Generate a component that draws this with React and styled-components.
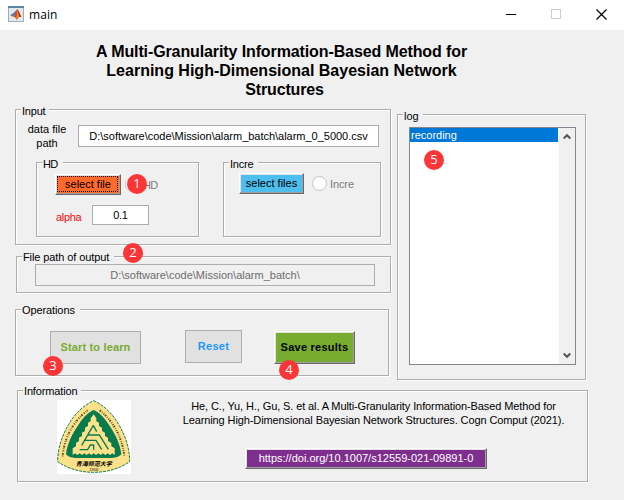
import React from "react";
import styled, { createGlobalStyle, css } from "styled-components";

const GlobalStyle = createGlobalStyle`
  * { box-sizing: border-box; }
  body { margin: 0; background: #f0f0f0; }
  button, input { font: inherit; margin: 0; }
`;

const Window = styled.div`
  position: relative;
  display: flex;
  flex-direction: column;
  width: 624px;
  height: 500px;
  overflow: hidden;
  background: #f0f0f0;
  color: #000;
  font: 11px/14px "Liberation Sans", Arial, sans-serif;
`;

const TitleBar = styled.header`
  display: flex;
  align-items: center;
  height: 30px;
  flex: none;
  padding: 0 17px 2px 8px;
  background: #fff;
`;

const AppName = styled.span`
  margin-left: 5px;
  font: 12px/16px "Open Sans", "Noto Sans", sans-serif;
  letter-spacing: 0.1px;
  padding-top: 2px;
`;

const WindowControls = styled.div`
  display: flex;
  gap: 35px;
  margin-left: auto;
  svg { display: block; }
`;

const Heading = styled.h1`
  width: 563px;
  height: 57px;
  margin: 12px 0 10px;
  flex: none;
  text-align: center;
  font-size: 16px;
  font-weight: 700;
  line-height: 19px;
`;

const HeadingLine = styled.span`
  display: block;
  padding-left: ${(p) => p.$shift || 0}px;
  letter-spacing: ${(p) => p.$ls || 0}px;
`;

const Columns = styled.div`
  display: flex;
  align-items: flex-start;
  gap: 6px;
  padding-left: 15px;
`;

const LeftColumn = styled.div`
  display: flex;
  flex-direction: column;
  width: 376px;
`;

const Group = styled.section`
  position: relative;
  flex: none;
  width: ${(p) => p.$w}px;
  height: ${(p) => p.$h}px;
  margin: ${(p) => p.$m || "0"};
  border: 1px solid #adadad;
  box-shadow: 1px 1px 0 #fff, inset 1px 1px 0 #fff;
`;

const Legend = styled.span`
  position: absolute;
  top: ${(p) => (p.$high ? -7 : -6)}px;
  left: 5px;
  width: ${(p) => p.$w}px;
  padding-left: 1px;
  background: #f0f0f0;
  white-space: nowrap;
  letter-spacing: ${(p) => p.$ls || 0}px;
`;

const PathRow = styled.div`
  display: flex;
  align-items: flex-start;
  height: 28px;
  margin-top: 12px;
`;

const PathLabel = styled.label`
  width: 62px;
  padding: 0 10px;
  text-align: center;
`;

const Field = styled.div`
  display: flex;
  align-items: center;
  justify-content: center;
  width: ${(p) => p.$w}px;
  height: ${(p) => p.$h}px;
  margin: ${(p) => p.$m || "0"};
  border: 1px solid ${(p) => (p.$disabled ? "#adadad" : "#abadb3")};
  background: ${(p) => (p.$disabled ? "#f0f0f0" : "#fff")};
  color: ${(p) => (p.$disabled ? "#6d6d6d" : "#000")};
  letter-spacing: ${(p) => p.$ls || 0}px;
  white-space: nowrap;
`;

const SubGroups = styled.div`
  display: flex;
  gap: 24px;
  margin: 12px 0 0 20px;
`;

const PickRow = styled.div`
  display: flex;
  align-items: center;
  padding-left: ${(p) => p.$left}px;
  margin-top: ${(p) => p.$top}px;
`;

const Button = styled.button`
  position: relative;
  display: flex;
  align-items: center;
  justify-content: center;
  flex: none;
  width: ${(p) => p.$w}px;
  height: ${(p) => p.$h}px;
  padding: 0 0 1px;
  border: 1px solid #adadad;
  border-radius: 0;
  background: ${(p) => p.$bg || "#e1e1e1"};
  color: ${(p) => p.$fg || "#000"};
  font-weight: ${(p) => (p.$bold ? 700 : 400)};
  letter-spacing: ${(p) => p.$ls || 0}px;
  white-space: nowrap;
  ${(p) =>
    p.$raised &&
    css`
      border-color: #fff #696969 #696969 #fff;
      box-shadow: inset -1px -1px 0 #a0a0a0, inset 1px 1px 0 #e3e3e3;
    `}
  ${(p) =>
    p.$focused &&
    css`
      &::after {
        content: "";
        position: absolute;
        inset: 1px 2px 2px 1px;
        border: 1px dotted #000;
      }
    `}
`;

const Radio = styled.span`
  display: flex;
  align-items: center;
  gap: 3px;
  margin-left: ${(p) => p.$left}px;
  color: #7b7b7b;
  letter-spacing: ${(p) => p.$ls || 0}px;
  &::before {
    content: "";
    width: 13px;
    height: 13px;
    border: 1px solid #c4c4c4;
    border-radius: 50%;
    background: #fff;
  }
`;

const AlphaRow = styled.div`
  display: flex;
  align-items: flex-start;
  margin: 10px 0 0 19px;
`;

const AlphaLabel = styled.label`
  width: 36px;
  padding-top: 5px;
  color: #f10d0d;
  letter-spacing: -0.3px;
`;

const OperationRow = styled.div`
  display: flex;
  align-items: flex-start;
  padding: 20px 0 0 34px;
`;

const Reset = styled(Button)`
  margin: 0 32px 0 44px;
`;

const Lowered = styled.div`
  padding-top: 1px;
`;

const ListBox = styled.div`
  display: flex;
  width: 167px;
  height: 238px;
  margin: 12px 0 0 11px;
  border: 1px solid #828790;
  background: #fff;
`;

const ListItems = styled.div`
  width: 149px;
`;

const SelectedItem = styled.div`
  width: 148px;
  height: 14px;
  padding-left: 1px;
  background: #0078d7;
  color: #fff;
`;

const ScrollBar = styled.div`
  display: flex;
  flex-direction: column;
  justify-content: space-between;
  align-items: center;
  flex: 1;
  padding: 5px 1px 5px 0;
  background: #f0f0f0;
`;

const InfoContent = styled.div`
  display: flex;
  padding: 9px 0 0 39px;
  svg { display: block; flex: none; }
`;

const Citation = styled.div`
  display: flex;
  flex-direction: column;
  align-items: center;
  flex: none;
  width: 485px;
  margin-right: -29px;
`;

const CitationText = styled.p`
  margin: -1px 0 21px;
  text-align: center;
  white-space: nowrap;
  letter-spacing: -0.105px;
`;

const DoiButton = styled(Button)`
  margin-right: 15px;
`;

const Badge = styled.span`
  position: absolute;
  left: ${(p) => p.$x - 10}px;
  top: ${(p) => p.$y - 10}px;
  width: 20px;
  height: 20px;
  border-radius: 50%;
  background: #fc3537;
  color: #fff;
  text-align: center;
  font: 13px/19px "Open Sans", "Noto Sans", sans-serif;
`;

const MatlabIcon = () => (
  <svg width="16" height="16" viewBox="0 0 16 16">
    <rect x=".5" y=".5" width="15" height="15" fill="#e3e8ec" stroke="#a3adb6" />
    <path d="M0 0h16v2H0z" fill="#5f86a4" />
    <path d="M2 9l3-1.500L7.500 5 9 3.500 7.500 8 5 10.800z" fill="#3f7fae" />
    <path d="M5 10.800C7 9.500 7.700 5 9.200 3.300c1.600 1.200 2.600 5.300 4.300 7.700-2-.8-3.300.4-4.700 3C8 11.800 6.600 11 5 10.800z" fill="#d64a1b" />
    <path d="M9.200 3.300C9 6 9.300 11 8 12.800l.8 1.200c1-2 1.900-3 2.700-3.200C10.500 8.500 10.300 5 9.200 3.300z" fill="#f08a26" />
    <path d="M9.300 3.400c1.600 1.200 2.500 5.200 4.200 7.600-.8-.4-1.400-.3-2-.1-1-2.600-1.200-5.500-2.200-7.500z" fill="#a92619" />
  </svg>
);

const Controls = () => (
  <WindowControls>
    <svg width="10" height="11" viewBox="0 0 10 11"><path d="M0 5.500h10" stroke="#000" /></svg>
    <svg width="10" height="11" viewBox="0 0 10 11"><rect x=".5" y=".5" width="9" height="9" fill="none" stroke="#ccc" /></svg>
    <svg width="11" height="11" viewBox="0 0 11 11"><path d="M.5.500l10 10M10.500.500l-10 10" stroke="#000" strokeWidth="1.200" /></svg>
  </WindowControls>
);

const Chevron = ({ down }) => (
  <svg width="8" height="7" viewBox="0 0 8 7">
    <path d={down ? "M.7 1.500L4 4.800l3.300-3.300" : "M.7 5.500L4 2.200l3.300 3.300"} fill="none" stroke="#555" strokeWidth="2" />
  </svg>
);

const UniversityLogo = () => (
  <svg width="74" height="74" viewBox="36 30 222 222">
    <path d="M36 30h222v222H36z" fill="#fff" />
    <path
      d="M146 32C176 46 202 70 221 103c21 36 33 73 33 112-30 21-69 32-108 32s-78-11-108-32c0-39 12-76 33-112C90 70 116 46 146 32z"
      fill="#fce18b" stroke="#17804e" strokeWidth="3" strokeDasharray="9 3"
    />
    <path
      d="M146 60c14 6 30 20 44 42 21 29 36 62 39 90-7 10-21 12-33 12H96c-12 0-26-2-33-12 3-28 18-61 39-90 14-22 30-36 44-42z"
      fill="#087b4d"
    />
    <path
      d="M146 73l8 12v9l8 4v10l9 5v10l9 5v10l9 5v10l10 6v10l10 6v20l-7-5-7 5-7-5-7 5-7-5-7 5-7-5-7 5-7-5-7 5-7-5-7 5-7-5-7 5-7-5-7 5-7-5-7 5v-20l10-6v-10l9-6v-10l9-5v-10l9-5v-10l9-5v-10l8-4v-9z"
      fill="#fce18b"
    />
    <path d="M145 106l-35 60M145 106l10 19M128 135h35l27 43M120 151h33l17 27M104 179h24l8-14h10v14" fill="none" stroke="#087b4d" strokeWidth="4" />
    <path d="M53 199c4-52 30-105 75-138" fill="none" stroke="#5c4c22" strokeWidth="6" strokeDasharray="2 3 5 5 3 4" />
    <path d="M164 61c42 32 69 86 74 138" fill="none" stroke="#5c4c22" strokeWidth="6" strokeDasharray="5 4 2 4 3 3" />
    <text x="146" y="227" textAnchor="middle" fontSize="18" fontStyle="italic" fontWeight="700" fontFamily='"Noto Sans CJK SC", sans-serif'>青海师范大学</text>
    <text x="146" y="243" textAnchor="middle" fontSize="12" fontFamily='"Liberation Sans", sans-serif'>1956</text>
  </svg>
);

const BADGES = [
  [1, 137, 184],
  [2, 133, 253],
  [3, 53, 366],
  [4, 289, 370],
  [5, 434, 160],
];

export default function App() {
  return (
    <Window>
      <GlobalStyle />
      <TitleBar>
        <MatlabIcon />
        <AppName>main</AppName>
        <Controls />
      </TitleBar>
      <Heading>
        <HeadingLine $ls={-0.11}>A Multi-Granularity Information-Based Method for</HeadingLine>
        <HeadingLine>Learning High-Dimensional Bayesian Network</HeadingLine>
        <HeadingLine $ls={-0.15} $shift={6}>Structures</HeadingLine>
      </Heading>
      <Columns>
        <LeftColumn>
          <Group $w={376} $h={136}>
            <Legend $w={28} $ls={-0.2}>Input</Legend>
            <PathRow>
              <PathLabel>data file path</PathLabel>
              <Field $w={301} $h={22} $m="3px 0 0" $ls={-0.02}>D:\software\code\Mission\alarm_batch\alarm_0_5000.csv</Field>
            </PathRow>
            <SubGroups>
              <Group $w={163} $h={75}>
                <Legend $w={21} $ls={-0.7}>HD</Legend>
                <PickRow $left={18} $top={11}>
                  <Button $w={66} $h={21} $bg="#ff6929" $raised $focused>select file</Button>
                  <Radio $left={4} $ls={-0.7}>HD</Radio>
                </PickRow>
                <AlphaRow>
                  <AlphaLabel>alpha</AlphaLabel>
                  <Field $w={57} $h={20} $ls={-0.3}>0.1</Field>
                </AlphaRow>
              </Group>
              <Group $w={158} $h={75}>
                <Legend $w={29} $ls={-0.2}>Incre</Legend>
                <PickRow $left={15} $top={10}>
                  <Button $w={65} $h={21} $bg="#4dbeee" $raised>select files</Button>
                  <Radio $left={8} $ls={-0.1}>Incre</Radio>
                </PickRow>
              </Group>
            </SubGroups>
          </Group>

          <Group $w={375} $h={37} $m="11px 0 0 1px">
            <Legend $w={92} $high $ls={-0.1}>File path of output</Legend>
            <Field $w={340} $h={22} $m="7px 0 0 18px" $disabled>D:\software\code\Mission\alarm_batch\</Field>
          </Group>

          <Group $w={374} $h={67} $m="16px 0 0">
            <Legend $w={59} $high $ls={-0.1}>Operations</Legend>
            <OperationRow>
              <Lowered>
                <Button $w={91} $h={33} $fg="#77ac30" $bold $ls={0.15}>Start to learn</Button>
              </Lowered>
              <Reset $w={57} $h={33} $fg="#1a98ff" $bold $ls={0.3}>Reset</Reset>
              <Lowered>
                <Button $w={81} $h={33} $bg="#77ac30" $bold $raised $ls={0.25}>Save results</Button>
              </Lowered>
            </OperationRow>
          </Group>
        </LeftColumn>

        <Group $w={189} $h={266} $m="5px 0 0">
          <Legend $w={20}>log</Legend>
          <ListBox>
            <ListItems>
              <SelectedItem>recording</SelectedItem>
            </ListItems>
            <ScrollBar>
              <Chevron />
              <Chevron down />
            </ScrollBar>
          </ListBox>
        </Group>
      </Columns>

      <Group $w={571} $h={92} $m="10px 0 0 17px">
        <Legend $w={58} $high $ls={-0.15}>Information</Legend>
        <InfoContent>
          <UniversityLogo />
          <Citation>
            <CitationText>
              He, C., Yu, H., Gu, S. et al. A Multi-Granularity Information-Based Method for<br />
              Learning High-Dimensional Bayesian Network Structures. Cogn Comput (2021).
            </CitationText>
            <DoiButton $w={242} $h={21} $bg="#7e2f8e" $fg="#fff" $raised>https://doi.org/10.1007/s12559-021-09891-0</DoiButton>
          </Citation>
        </InfoContent>
      </Group>

      {BADGES.map(([n, x, y]) => (
        <Badge key={n} $x={x} $y={y}>{n}</Badge>
      ))}
    </Window>
  );
}
